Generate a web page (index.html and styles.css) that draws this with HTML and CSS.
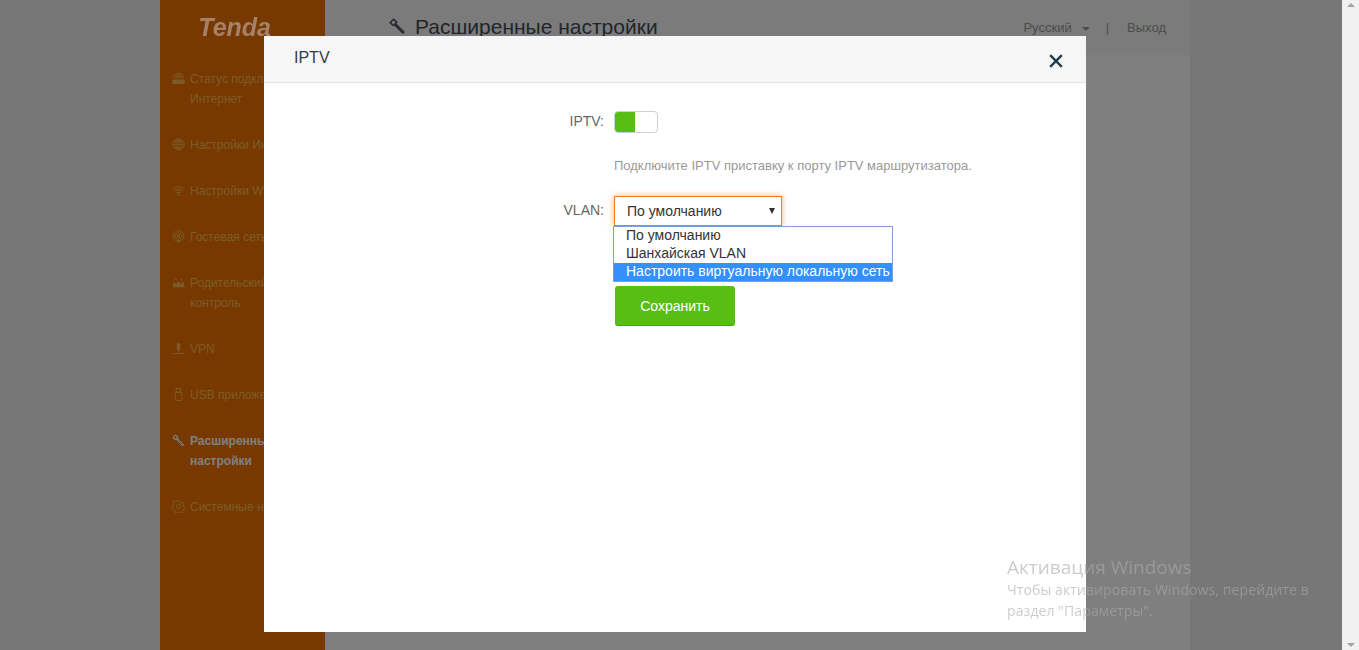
FILE: index.html
```html
<!DOCTYPE html>
<html lang="ru">
<head>
    <meta charset="UTF-8">
    <title>Tenda - Расширенные настройки</title>
    <link rel="stylesheet" href="styles.css">
</head>
<body>

<div class="page">
    <div class="wrapper">
        <div class="sidebar">
            <div class="logo">Tenda</div>
            <ul class="nav">
                <li class="nav-item">
                    <svg class="nav-icon" viewBox="0 0 14 14"><rect x=".5" y="8" width="13" height="5" rx=".6" fill="currentColor"/><path d="M2 6.500a5 5 0 0 1 10 0M4.400 6.500a2.600 2.600 0 0 1 5.200 0M7 8V5" fill="none" stroke="currentColor" stroke-width="1.200"/></svg>
                    <span>Статус подключения к<br>Интернет</span>
                </li>
                <li class="nav-item">
                    <svg class="nav-icon" viewBox="0 0 14 14"><g fill="none" stroke="currentColor"><circle cx="7" cy="7" r="6"/><ellipse cx="7" cy="7" rx="2.800" ry="6"/><path d="M1 7h12M7 1v12M2 3.800h10M2 10.200h10" stroke-width=".8"/></g></svg>
                    <span>Настройки Интернет</span>
                </li>
                <li class="nav-item">
                    <svg class="nav-icon" viewBox="0 0 14 14"><g fill="none" stroke="currentColor" stroke-width="1.100"><path d="M.7 5.500a9 9 0 0 1 12.600 0M2.800 7.700a6 6 0 0 1 8.400 0M4.800 9.800a3.200 3.200 0 0 1 4.400 0"/></g><circle cx="7" cy="11.800" r="1.100" fill="currentColor"/></svg>
                    <span>Настройки WiFi</span>
                </li>
                <li class="nav-item">
                    <svg class="nav-icon" viewBox="0 0 14 14"><g fill="none" stroke="currentColor"><circle cx="7" cy="6.500" r="5.800"/><circle cx="7" cy="6.500" r="3.500"/></g><circle cx="7" cy="6.500" r="1.700" fill="currentColor"/><path d="M5 11h4l-.6 2.500H5.600z" fill="currentColor"/></svg>
                    <span>Гостевая сеть</span>
                </li>
                <li class="nav-item">
                    <svg class="nav-icon" viewBox="0 0 14 14"><path d="M1 12V8.500l1.500-2 1.500 1.500h1.500V6.500h3V8H10l1.500-2 1.500 2.500V12z" fill="currentColor"/><path d="M3 4.500l1-1.500 1 1.500M9 4.500l1-1.500 1 1.500" fill="none" stroke="currentColor"/></svg>
                    <span>Родительский<br>контроль</span>
                </li>
                <li class="nav-item">
                    <svg class="nav-icon" viewBox="0 0 14 14"><path d="M7 1a2 2 0 0 1 2 2v6H5V3a2 2 0 0 1 2-2z" fill="currentColor"/><path d="M7 9v3M.5 12.500h13" stroke="currentColor" fill="none"/></svg>
                    <span>VPN</span>
                </li>
                <li class="nav-item">
                    <svg class="nav-icon" viewBox="0 0 14 14"><g fill="none" stroke="currentColor"><rect x="4.500" y=".5" width="5" height="4"/><rect x="3.500" y="4.500" width="7" height="9" rx="1"/></g></svg>
                    <span>USB приложение</span>
                </li>
                <li class="nav-item active">
                    <svg class="nav-icon" viewBox="0 0 14 14"><use href="#hammer"/></svg>
                    <span>Расширенные<br>настройки</span>
                </li>
                <li class="nav-item">
                    <svg class="nav-icon" viewBox="0 0 14 14"><g fill="none" stroke="currentColor"><path d="M5.800.8h2.400l.4 1.600 1.500.7 1.500-.8 1.500 1.900-1 1.300.3 1.500 1.500.8-.5 2.300-1.700.2-1 1.300.4 1.600-2.200 1-1.100-1.300H6.200l-1.100 1.300-2.200-1 .4-1.600-1-1.300-1.700-.2L.1 6.500l1.500-.8.300-1.500-1-1.300 1.500-1.900 1.500.8 1.500-.7z"/><circle cx="7" cy="7" r="2.200"/></g></svg>
                    <span>Системные настройки</span>
                </li>
            </ul>
        </div>

        <div class="content">
            <div class="topbar">
                <h1 class="page-title">
                    <svg class="title-icon" viewBox="0 0 14 14"><use href="#hammer"/></svg>
                    Расширенные настройки
                </h1>
                <div class="top-links">
                    <span>Русский</span>
                    <i class="caret"></i>
                    <span class="top-sep">|</span>
                    <span>Выход</span>
                </div>
            </div>
            <div class="main"></div>
        </div>
    </div>
    <div class="page-side"></div>
</div>

<div class="scrollbar">
    <i class="scroll-up"></i>
    <i class="scroll-down"></i>
</div>

<div class="overlay">
    <div class="modal">
        <div class="modal-header">
            <span class="modal-title">IPTV</span>
            <svg class="modal-close" viewBox="0 0 12 12"><path d="M1 1l10 10M11 1L1 11" fill="none" stroke="#1f3b4d" stroke-width="2"/></svg>
        </div>
        <div class="modal-body">
            <div class="form-row">
                <label class="form-label">IPTV:</label>
                <div class="toggle"><div class="toggle-on"></div></div>
            </div>
            <p class="form-help">Подключите IPTV приставку к порту IPTV маршрутизатора.</p>
            <div class="form-row vlan-row">
                <label class="form-label">VLAN:</label>
                <div class="select-wrap">
                    <div class="select-box">
                        <span>По умолчанию</span>
                        <i class="select-arrow"></i>
                    </div>
                    <ul class="select-list">
                        <li>По умолчанию</li>
                        <li>Шанхайская VLAN</li>
                        <li class="selected">Настроить виртуальную локальную сеть</li>
                    </ul>
                </div>
            </div>
            <button class="save-btn" type="button">Сохранить</button>
        </div>
    </div>
</div>

<div class="watermark">
    <div class="watermark-title">Активация Windows</div>
    <div class="watermark-text">Чтобы активировать Windows, перейдите в<br>раздел "Параметры".</div>
</div>

<svg class="svg-defs" width="0" height="0">
    <symbol id="hammer" viewBox="0 0 14 14">
        <path d="M1 3.800L3.800 1l2.600 2.400-2.800 2.800z" fill="none" stroke="currentColor" stroke-width="1.200"/>
        <path d="M5.200 5.400l7 7" fill="none" stroke="currentColor" stroke-width="2.400"/>
        <path d="M6.200 6.400l5 5" fill="none" stroke="#777" stroke-width=".7"/>
    </symbol>
</svg>

</body>
</html>
```

FILE: styles.css
```css
html, body {
    margin: 0;
    padding: 0;
    height: 650px;
    overflow: hidden;
}
body {
    font-family: "Liberation Sans", Arial, sans-serif;
    background-color: #eee;
    color: #333;
}
.page {
    display: flex;
    width: 1342px;
    height: 650px;
    padding-left: 160px;
    box-sizing: border-box;
}
.wrapper {
    display: flex;
    width: 1030px;
}
.sidebar {
    width: 165px;
    background-color: #ef7300;
    color: #f9b752;
}
.logo {
    position: relative;
    z-index: 1;
    height: 55px;
    padding: 12px 54px 0 0;
    box-sizing: border-box;
    text-align: right;
    font-size: 25px;
    line-height: 30px;
    font-weight: bold;
    font-style: italic;
    color: #a5816a;
}
.nav {
    list-style: none;
    margin: 14px 0 0;
    padding: 0;
}
.nav-item {
    display: flex;
    gap: 5px;
    padding: 0 0 26px 12px;
    font-size: 12px;
    line-height: 20px;
    white-space: nowrap;
}
.nav-item.active {
    color: #fff;
    font-weight: bold;
}
.nav-icon {
    width: 13px;
    height: 13px;
    margin-top: 3px;
    flex: none;
}
.content {
    flex: 1;
    background-color: #fff;
}
.topbar {
    display: flex;
    justify-content: space-between;
    height: 55px;
    padding: 0 24px 0 64px;
    background-color: #f6f6f6;
    box-sizing: border-box;
}
.page-title {
    display: flex;
    align-items: center;
    gap: 9px;
    margin: 0;
    height: 53px;
    font-size: 21px;
    font-weight: normal;
    color: #444c58;
}
.title-icon {
    width: 17px;
    height: 17px;
}
.top-links {
    display: flex;
    align-items: center;
    height: 55px;
    font-size: 13px;
    color: #999;
}
.caret {
    width: 0;
    height: 0;
    margin: 2px 0 0 10px;
    border: 4px solid transparent;
    border-top-color: #999;
    border-bottom: 0;
}
.top-sep {
    margin: 0 18px 0 16px;
}
.page-side {
    flex: 1;
}
.scrollbar {
    position: fixed;
    top: 0;
    right: 0;
    width: 17px;
    height: 650px;
    background-color: #f1f1f1;
}
.scroll-up,
.scroll-down {
    position: absolute;
    left: 5px;
    width: 0;
    height: 0;
    border-left: 4px solid transparent;
    border-right: 4px solid transparent;
}
.scroll-up {
    top: 3px;
    border-bottom: 4px solid #a3a3a3;
}
.scroll-down {
    bottom: 3px;
    border-top: 4px solid #a3a3a3;
}
.overlay {
    position: fixed;
    top: 0;
    left: 0;
    right: 17px;
    bottom: 0;
    background-color: rgba(0, 0, 0, 0.5);
}
.modal {
    position: absolute;
    top: 36px;
    left: 264px;
    width: 822px;
    height: 596px;
    background-color: #fff;
}
.modal-header {
    display: flex;
    justify-content: space-between;
    align-items: center;
    height: 46px;
    padding: 0 23px 0 30px;
    background-color: #f6f6f6;
    border-bottom: 1px solid #e5e5e5;
}
.modal-title {
    font-size: 16px;
    color: #333c48;
    margin-top: -2px;
}
.modal-close {
    width: 14px;
    height: 14px;
    margin-top: 3px;
}
.modal-body {
    padding-top: 28px;
}
.form-row {
    display: flex;
}
.form-label {
    width: 340px;
    margin-right: 10px;
    text-align: right;
    font-size: 14px;
    line-height: 20px;
    color: #666;
}
.toggle {
    width: 44px;
    height: 22px;
    background-color: #fff;
    border: 1px solid #ccd0d6;
    border-radius: 4px;
    box-sizing: border-box;
    overflow: hidden;
}
.toggle-on {
    width: 20px;
    height: 100%;
    background-color: #57bf14;
}
.form-help {
    margin: 25px 0 0 350px;
    font-size: 13px;
    line-height: 16px;
    color: #999;
}
.vlan-row {
    margin-top: 22px;
    line-height: 30px;
}
.vlan-row .form-label {
    line-height: 28px;
}
.select-wrap {
    position: relative;
}
.select-box {
    display: flex;
    justify-content: space-between;
    align-items: center;
    width: 168px;
    height: 30px;
    padding: 0 5px 0 12px;
    box-sizing: border-box;
    background-color: #fff;
    border: 1px solid #ef7a26;
    box-shadow: 0 0 6px rgba(239, 122, 38, 0.6);
    font-size: 14px;
    color: #333;
}
.select-arrow {
    width: 0;
    height: 0;
    margin-right: 1px;
    border-left: 3px solid transparent;
    border-right: 3px solid transparent;
    border-top: 6px solid #333;
}
.select-list {
    position: absolute;
    top: 30px;
    left: -1px;
    width: 280px;
    margin: 0;
    padding: 0;
    list-style: none;
    background-color: #fff;
    border: 1px solid #7f9fd9;
    box-sizing: border-box;
    font-size: 14px;
    line-height: 16px;
    color: #333;
    white-space: nowrap;
}
.select-list li {
    padding: 0 0 2px 12px;
}
.select-list .selected {
    background-color: #3390ff;
    color: #fff;
}
.save-btn {
    display: block;
    width: 120px;
    height: 40px;
    margin: 60px 0 0 351px;
    background-color: #57bf14;
    color: #fff;
    border: none;
    border-bottom: 1px solid #45a00e;
    border-radius: 3px;
    font-family: inherit;
    font-size: 14px;
}
.watermark {
    position: fixed;
    left: 1007px;
    top: 555px;
    color: rgba(170, 170, 170, 0.6);
    font-family: "Open Sans", sans-serif;
}
.watermark-title {
    font-size: 19px;
    line-height: 24px;
}
.watermark-text {
    font-size: 14px;
    line-height: 21px;
    letter-spacing: 0.1px;
}
.svg-defs {
    position: absolute;
}
```
